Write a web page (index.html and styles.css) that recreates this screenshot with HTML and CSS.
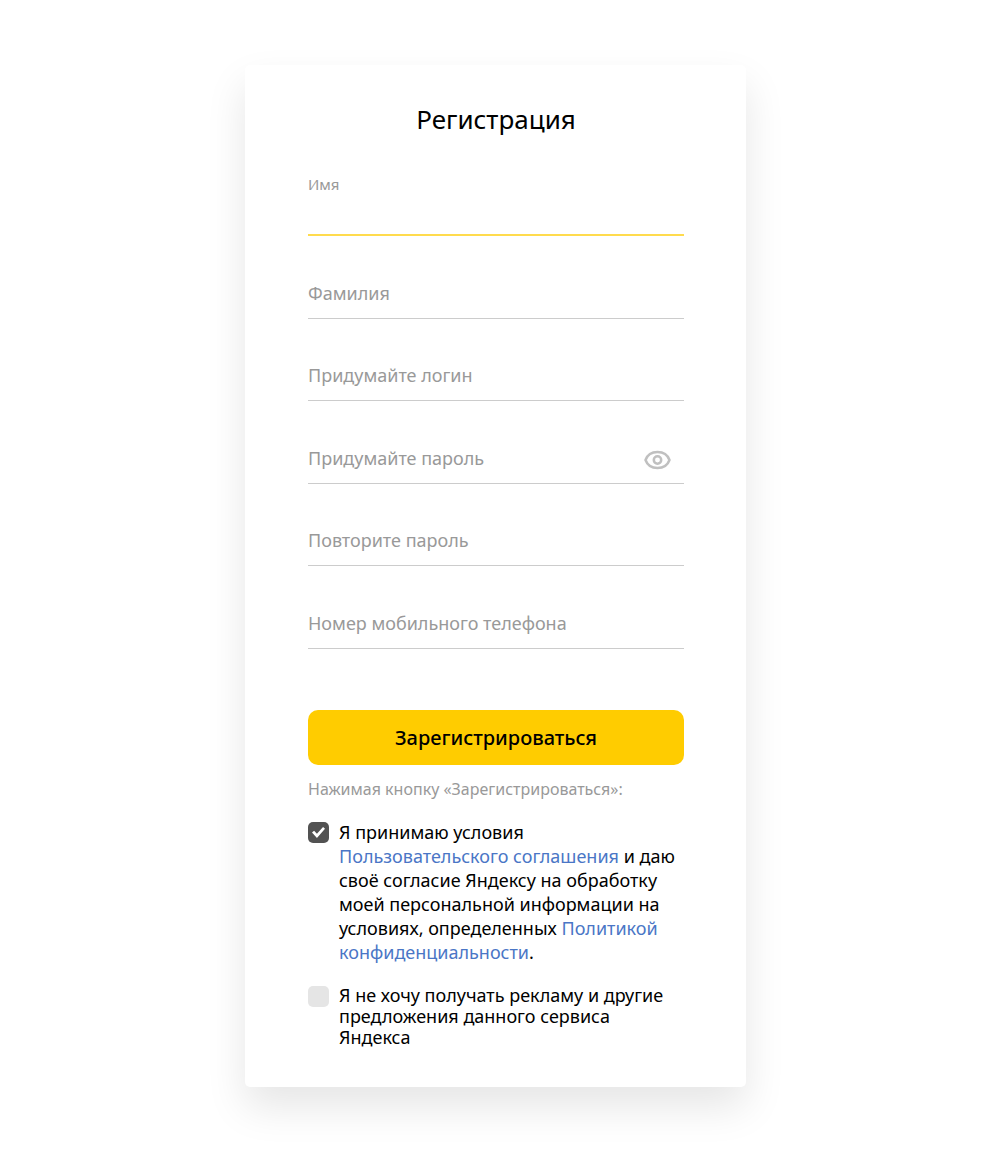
FILE: index.html
```html
<!DOCTYPE html>
<html lang="ru">

	<head>
		<meta charset="UTF-8">
		<meta name="viewport" content="width=device-width, initial-scale=1">
		<title>Регистрация</title>
		<link rel="stylesheet" href="styles.css">
	</head>

	<body>
		<main class="wrap">
			<form class="card">
				<h1 class="title">Регистрация</h1>

				<div class="fields">
					<div class="field active">
						<input type="text" id="firstname">
						<label for="firstname">Имя</label>
					</div>
					<div class="field">
						<input type="text" id="lastname">
						<label for="lastname">Фамилия</label>
					</div>
					<div class="field">
						<input type="text" id="login">
						<label for="login">Придумайте логин</label>
					</div>
					<div class="field">
						<input type="password" id="password">
						<label for="password">Придумайте пароль</label>
						<button type="button" class="eye" aria-label="Показать пароль">
							<svg width="28" height="20" viewBox="0 0 28 20" fill="none" stroke="#c0c0c0">
								<path d="M2.500 10C4.500 4.500 9 2 14.500 2s10 2.500 12 8c-2 5.500-6.500 8-12 8s-10-2.500-12-8z" stroke-width="2.500" stroke-linejoin="round"/>
								<circle cx="14.500" cy="10" r="3.700" stroke-width="2.500"/>
							</svg>
						</button>
					</div>
					<div class="field">
						<input type="password" id="confirm">
						<label for="confirm">Повторите пароль</label>
					</div>
					<div class="field">
						<input type="tel" id="phone">
						<label for="phone">Номер мобильного телефона</label>
					</div>
				</div>

				<button type="submit" class="submit">Зарегистрироваться</button>
				<p class="note">Нажимая кнопку «Зарегистрироваться»:</p>

				<div class="agree">
					<input type="checkbox" id="eula" checked>
					<label for="eula">Я принимаю условия<br>
						<a href="#">Пользовательского соглашения</a> и даю<br>
						своё согласие Яндексу на обработку<br>
						моей персональной информации на<br>
						условиях, определенных <a href="#">Политикой<br>
						конфиденциальности</a>.</label>
				</div>
				<div class="agree small">
					<input type="checkbox" id="ads">
					<label for="ads">Я не хочу получать рекламу и другие<br>
						предложения данного сервиса<br>
						Яндекса</label>
				</div>
			</form>
		</main>
	</body>

</html>
```

FILE: styles.css
```css
* {
	box-sizing: border-box;
}

body {
	margin: 0;
	background: #fff;
	color: #000;
	font: 18px/24px "Noto Sans", sans-serif;
}

.wrap {
	display: flex;
	justify-content: center;
	padding: 65px 9px 76px 0;
}

.card {
	width: 100%;
	max-width: 501px;
	padding: 36px 62px 39px 63px;
	background: #fff;
	border-radius: 5px;
	box-shadow: 0 20px 40px rgba(0, 0, 0, .1);
}

.title {
	margin: 0;
	font-size: 26px;
	line-height: 36px;
	font-weight: 400;
	text-align: center;
}

/* поля формы: подпись лежит в той же ячейке, что и поле */
.fields {
	padding-top: 17px;
}

.field {
	display: grid;
	grid-template-columns: 1fr 54px;
	align-items: end;
	height: 83px;
}

.field:nth-child(odd) {
	height: 82px;
}

.field input,
.field label {
	grid-row: 1;
	grid-column: 1 / 3;
}

.field input {
	width: 100%;
	height: 50px;
	padding: 0;
	border: 0;
	border-bottom: 1px solid #ccc;
	background: none;
	font: inherit;
	outline: none;
}

.field label {
	padding-bottom: 14px;
	color: #999;
	cursor: text;
}

.field.active input {
	border-bottom: 2px solid #ffdb4d;
}

.field.active label {
	padding-bottom: 40px;
	font-size: 15px;
}

.eye {
	grid-row: 1;
	grid-column: 2;
	display: flex;
	justify-content: center;
	padding: 0 0 14px;
	border: 0;
	background: none;
	cursor: pointer;
}

.submit {
	display: block;
	width: 100%;
	height: 55px;
	margin-top: 61px;
	padding: 0;
	border: 0;
	border-radius: 10px;
	background: #fc0;
	color: #000;
	font: 500 20px/54px "Noto Sans", sans-serif;
	cursor: pointer;
}

.note {
	margin: 12px 0 19px;
	color: #999;
	font-size: 16px;
}

.agree {
	display: flex;
	gap: 10px;
	align-items: flex-start;
}

.agree input {
	flex: none;
	appearance: none;
	display: grid;
	place-items: center;
	width: 21px;
	height: 21px;
	margin: 2px 0 0;
	border-radius: 5px;
	background: #e5e5e5;
}

.agree input:checked {
	background: #525252;
}

/* галочка */
.agree input:checked::before {
	content: "";
	width: 13px;
	height: 11px;
	background: #fff;
	clip-path: polygon(0 50%, 16% 33%, 38% 62%, 85% 0, 100% 16%, 38% 100%);
}

.agree label {
	flex: 1;
	white-space: nowrap;
}

.agree a {
	color: #4a76c6;
	text-decoration: none;
}

.agree.small {
	margin-top: 21px;
	line-height: 21px;
}

.agree.small input {
	margin-top: 1px;
}
```
